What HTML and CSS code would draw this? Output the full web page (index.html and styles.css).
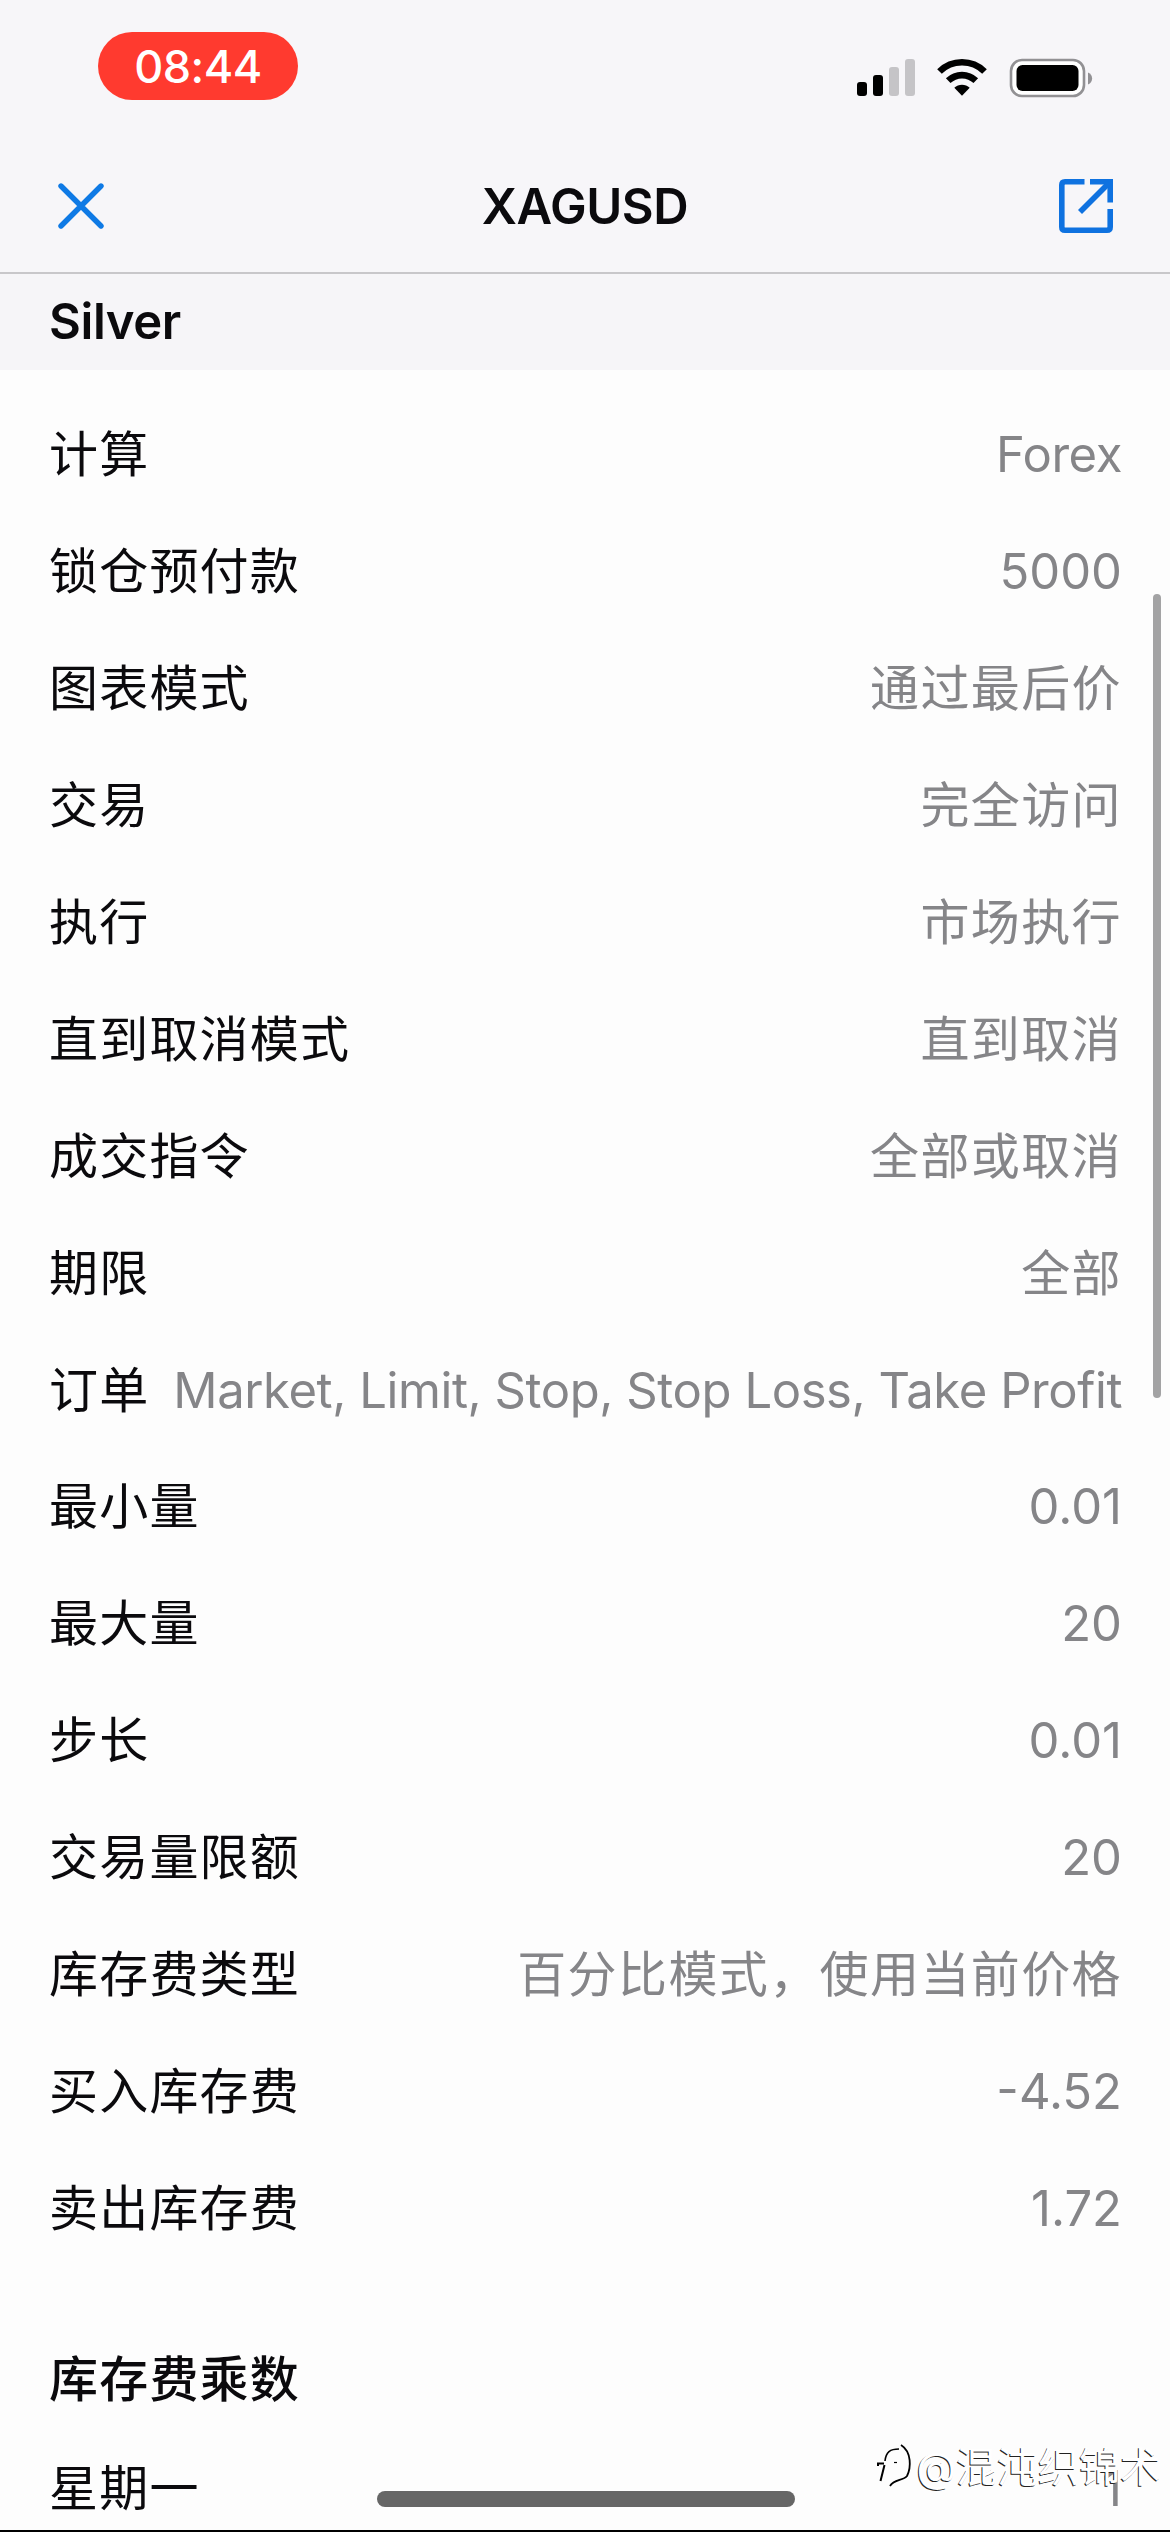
FILE: index.html
```html
<!DOCTYPE html>
<html lang="zh-CN">
<head>
    <meta charset="UTF-8">
    <meta name="viewport" content="width=device-width, initial-scale=1.0">
    <title>XAGUSD</title>
    <link rel="stylesheet" href="styles.css">
</head>
<body>
<div class="screen">
    <!-- Status bar -->
    <div class="status-bar">
        <div class="clock">08:44</div>
        <div class="status-icons">
            <svg class="signal" width="60" height="40" viewBox="0 0 60 40">
                <rect x="1" y="24" width="10" height="14" rx="3" fill="#000"/>
                <rect x="17" y="17" width="10" height="21" rx="3" fill="#000"/>
                <rect x="33" y="9" width="10" height="29" rx="3" fill="#c5c4c7"/>
                <rect x="49" y="1" width="10" height="37" rx="3" fill="#c5c4c7"/>
            </svg>
            <svg class="wifi" width="50" height="40" viewBox="0 0 50 40">
                <g fill="none" stroke="#000" stroke-width="6.6">
                    <path d="M2.5 13.5C15 1.2 35 1.2 47.5 13.5"/>
                    <path d="M11.2 22.7C19 15.2 31 15.2 38.8 22.7"/>
                </g>
                <path d="M17.3 29.8C21.5 25.7 28.5 25.7 32.7 29.8L25 37.8Z" fill="#000"/>
            </svg>
            <svg class="battery" width="84" height="40" viewBox="0 0 84 40">
                <rect x="2" y="2" width="73" height="36" rx="11" fill="#fff" stroke="#929194" stroke-width="2.6"/>
                <rect x="7.500" y="7" width="62" height="26" rx="6" fill="#000"/>
                <path d="M79 14.5C84.5 16.5 84.5 24.5 79 26.5Z" fill="#929194"/>
            </svg>
        </div>
    </div>

    <!-- Navigation -->
    <div class="nav-bar">
        <svg class="close-icon" width="46" height="46" viewBox="0 0 46 46">
            <path d="M3 3L43 43M43 3L3 43" fill="none" stroke="#0f7ae5" stroke-width="5.4" stroke-linecap="round"/>
        </svg>
        <h1 class="nav-title">XAGUSD</h1>
        <svg class="open-icon" width="56" height="56" viewBox="0 0 56 56">
            <g fill="none" stroke="#0f72e0" stroke-width="5.6">
                <path d="M26.5 3.8H7Q3.8 3.8 3.8 7V49Q3.8 52.2 7 52.2H49Q52.2 52.2 52.2 49V31"/>
                <path d="M32 3.8H52.2V24.500"/>
                <path d="M22 34L51 5"/>
            </g>
        </svg>
    </div>

    <h2 class="symbol-name">Silver</h2>

    <!-- Contract specification -->
    <div class="rows">
        <div class="row"><span class="label">计算</span><span class="value latin">Forex</span></div>
        <div class="row"><span class="label">锁仓预付款</span><span class="value">5000</span></div>
        <div class="row"><span class="label">图表模式</span><span class="value cjk">通过最后价</span></div>
        <div class="row"><span class="label">交易</span><span class="value cjk">完全访问</span></div>
        <div class="row"><span class="label">执行</span><span class="value cjk">市场执行</span></div>
        <div class="row"><span class="label">直到取消模式</span><span class="value cjk">直到取消</span></div>
        <div class="row"><span class="label">成交指令</span><span class="value cjk">全部或取消</span></div>
        <div class="row"><span class="label">期限</span><span class="value cjk">全部</span></div>
        <div class="row"><span class="label">订单</span><span class="value latin">Market, Limit, Stop, Stop Loss, Take Profit</span></div>
        <div class="row"><span class="label">最小量</span><span class="value">0.01</span></div>
        <div class="row"><span class="label">最大量</span><span class="value">20</span></div>
        <div class="row"><span class="label">步长</span><span class="value">0.01</span></div>
        <div class="row"><span class="label">交易量限额</span><span class="value">20</span></div>
        <div class="row"><span class="label">库存费类型</span><span class="value cjk">百分比模式，使用当前价格</span></div>
        <div class="row"><span class="label">买入库存费</span><span class="value">-4.52</span></div>
        <div class="row"><span class="label">卖出库存费</span><span class="value">1.72</span></div>
    </div>

    <h2 class="section-title">库存费乘数</h2>
    <div class="row"><span class="label">星期一</span><span class="value">1</span></div>

    <!-- Overlays -->
    <div class="scrollbar"></div>
    <div class="home-indicator"></div>
    <div class="watermark">
        <svg class="watermark-logo" width="38" height="48" viewBox="0 0 38 48">
            <g fill="none" stroke="#000">
                <path d="M2 23V20.500H8M8.500 22L4.500 38" stroke-width="2"/>
                <path d="M9 18C10 9 14 6 23 6" stroke-width="1.6"/>
                <path d="M18 19.500H21" stroke-width="1.2"/>
                <path d="M25 2C36 9 35 25 31 33C27 38 18 36 14 43" stroke-width="1.8"/>
            </g>
        </svg>
        <span class="watermark-text">@混沌织锦术</span>
    </div>
    <div class="bottom-edge"></div>
</div>
</body>
</html>
```
FILE: styles.css
```css
* {
    box-sizing: border-box;
}

body {
    margin: 0;
    background-color: #fdfdfd;
    font-family: Inter, "Noto Sans CJK SC", sans-serif;
    color: #0b0a0d;
}

.screen {
    position: relative;
    width: 1170px;
    height: 2532px;
    overflow: hidden;
}

/* Status bar */
.status-bar {
    display: flex;
    justify-content: space-between;
    align-items: flex-start;
    height: 141px;
    padding: 32px 77px 0 98px;
    background-color: #f7f6f9;
}

.clock {
    width: 200px;
    height: 68px;
    border-radius: 34px;
    background-color: #ff3a2f;
    color: #fff;
    font-size: 45px;
    font-weight: 500;
    line-height: 70px;
    letter-spacing: -0.5px;
    text-align: center;
}

.status-icons {
    display: flex;
    align-items: center;
    padding-top: 26px;
}

.wifi {
    margin-left: 21px;
}

.battery {
    margin-left: 22px;
}

/* Navigation */
.nav-bar {
    display: flex;
    justify-content: space-between;
    align-items: center;
    height: 133px;
    padding: 0 56px 2px 58px;
    background-color: #f7f6f9;
    border-bottom: 2px solid #c8c7ca;
}

.nav-title {
    margin: 0;
    padding: 2px 0 0 8px;
    font-size: 49px;
    font-weight: 600;
    line-height: 60px;
    letter-spacing: -0.4px;
}

.symbol-name {
    margin: 0;
    height: 96px;
    padding-left: 49px;
    background-color: #f6f5f8;
    font-size: 49px;
    font-weight: 600;
    line-height: 96px;
    letter-spacing: -0.4px;
}

/* Rows */
.rows {
    padding-top: 27px;
}

.row {
    display: flex;
    justify-content: space-between;
    align-items: center;
    height: 116.9px;
    padding: 0 48px 0 49px;
    font-size: 49px;
    line-height: 60px;
    white-space: nowrap;
}

.label {
    letter-spacing: 1.2px;
}

.value {
    color: #858588;
}

.value.cjk {
    letter-spacing: 1.4px;
}

.value.latin {
    letter-spacing: -0.42px;
}

.section-title {
    margin: 0;
    padding: 83px 0 20px 49px;
    font-size: 49px;
    font-weight: 500;
    line-height: 60px;
    letter-spacing: 1.2px;
}

/* Overlays */
.scrollbar {
    position: absolute;
    top: 594px;
    right: 9px;
    width: 8px;
    height: 804px;
    border-radius: 4px;
    background-color: #a3a3a4;
}

.home-indicator {
    position: absolute;
    left: 377px;
    bottom: 25px;
    width: 418px;
    height: 16px;
    border-radius: 8px;
    background-color: #666;
}

.watermark {
    position: absolute;
    right: 9px;
    bottom: 37px;
    display: flex;
    align-items: center;
    gap: 2px;
    height: 56px;
}

.watermark-text {
    color: #fff;
    font-size: 41px;
    line-height: 56px;
    text-shadow: -1px 1px 0 #222;
}

.bottom-edge {
    position: absolute;
    left: 0;
    right: 0;
    bottom: 0;
    height: 2px;
    background-color: #000;
}
```
